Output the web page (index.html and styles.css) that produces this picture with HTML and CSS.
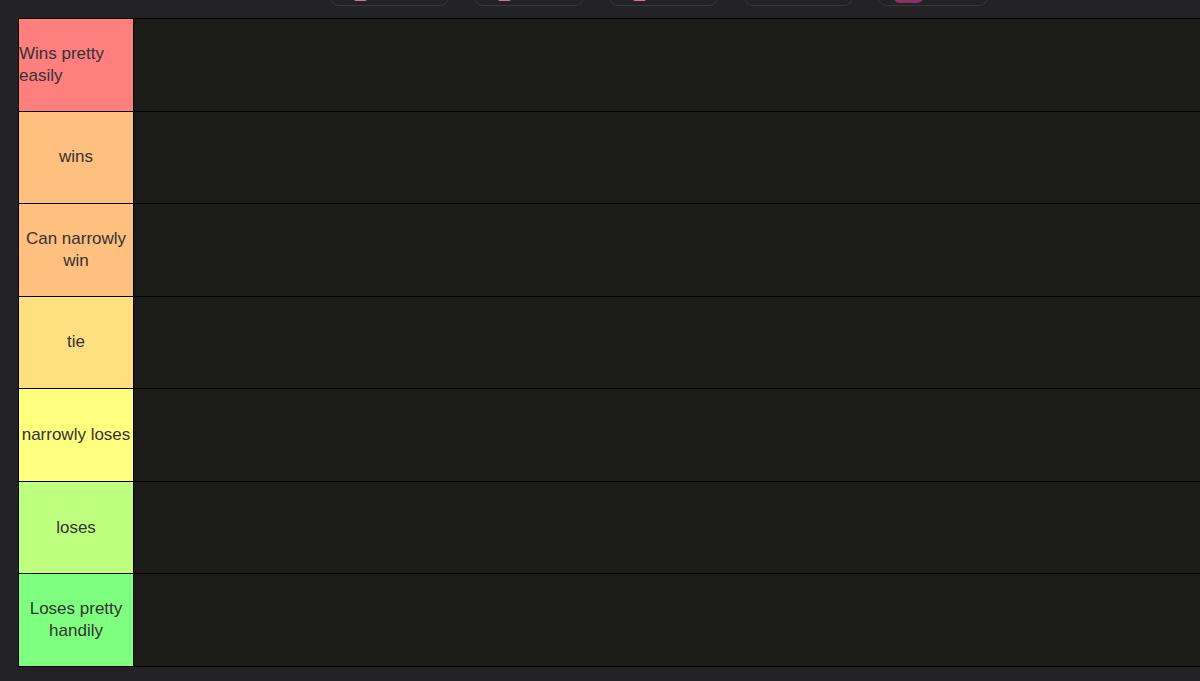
FILE: index.html
```html
<!DOCTYPE html>
<html lang="en">
<head>
<meta charset="utf-8">
<title>Tier list</title>
<link rel="stylesheet" href="styles.css">
</head>
<body>
<div class="page">
  <div class="toolbar">
    <button class="tool tool-1"><span class="tool-icon"></span></button>
    <button class="tool tool-2"><span class="tool-icon"></span></button>
    <button class="tool tool-3"><span class="tool-icon"></span></button>
    <button class="tool tool-4"></button>
    <button class="tool tool-5"><span class="tool-blob"></span></button>
  </div>
  <div class="tier-list">
    <div class="tier"><div class="label label-left red">Wins pretty easily</div><div class="items"></div></div>
    <div class="tier"><div class="label orange">wins</div><div class="items"></div></div>
    <div class="tier"><div class="label orange">Can narrowly win</div><div class="items"></div></div>
    <div class="tier"><div class="label light-orange">tie</div><div class="items"></div></div>
    <div class="tier"><div class="label yellow">narrowly loses</div><div class="items"></div></div>
    <div class="tier"><div class="label lime">loses</div><div class="items"></div></div>
    <div class="tier"><div class="label green">Loses pretty handily</div><div class="items"></div></div>
  </div>
</div>
</body>
</html>
```

FILE: styles.css
```css
html, body {
  margin: 0;
  padding: 0;
  background: #232224;
  overflow: hidden;
}

.page {
  width: 1200px;
  height: 681px;
  overflow: hidden;
  font-family: "Liberation Sans", Arial, sans-serif;
}

.toolbar {
  height: 18px;
  overflow: hidden;
  display: flex;
  align-items: flex-end;
  padding-left: 330px;
  box-sizing: border-box;
}

.tool {
  flex: none;
  height: 40px;
  margin-bottom: 12px;
  margin-right: 25px;
  background: #232224;
  border: 1px solid #38373a;
  border-radius: 9px;
  padding: 0 0 0 23px;
  display: flex;
  align-items: flex-end;
}

.tool-1 { width: 119px; }
.tool-2 { width: 110px; }
.tool-3 { width: 109px; margin-right: 26px; }
.tool-4 { width: 109px; margin-right: 25px; }
.tool-5 { width: 110px; padding-left: 14px; }

.tool-icon {
  display: block;
  width: 13px;
  height: 14px;
  margin-bottom: 4px;
  background: #e8679b;
  border-radius: 2px;
}

.tool-blob {
  display: block;
  width: 31px;
  height: 14px;
  margin-bottom: 2px;
  background: #8c3262;
  border-radius: 7px;
}

.tier-list {
  margin-left: 18px;
  width: 1300px;
  border-top: 1px solid #000;
  border-left: 1px solid #000;
  background: #1b1b18;
}

.tier {
  display: flex;
  height: 92.57px;
  box-sizing: border-box;
  border-bottom: 1px solid #000;
}

.label {
  flex: none;
  width: 115px;
  box-sizing: border-box;
  border-right: 1px solid #000;
  display: flex;
  align-items: center;
  justify-content: center;
  text-align: center;
  font-size: 17px;
  line-height: 22px;
  color: #333;
}

.label-left {
  justify-content: flex-start;
  text-align: left;
}

.items {
  flex: 1;
  background: #1b1b18;
}

.red { background: #ff7f7f; }
.orange { background: #ffbf7f; }
.light-orange { background: #ffdf7f; }
.yellow { background: #ffff7f; }
.lime { background: #bfff7f; }
.green { background: #7fff7f; }
```
